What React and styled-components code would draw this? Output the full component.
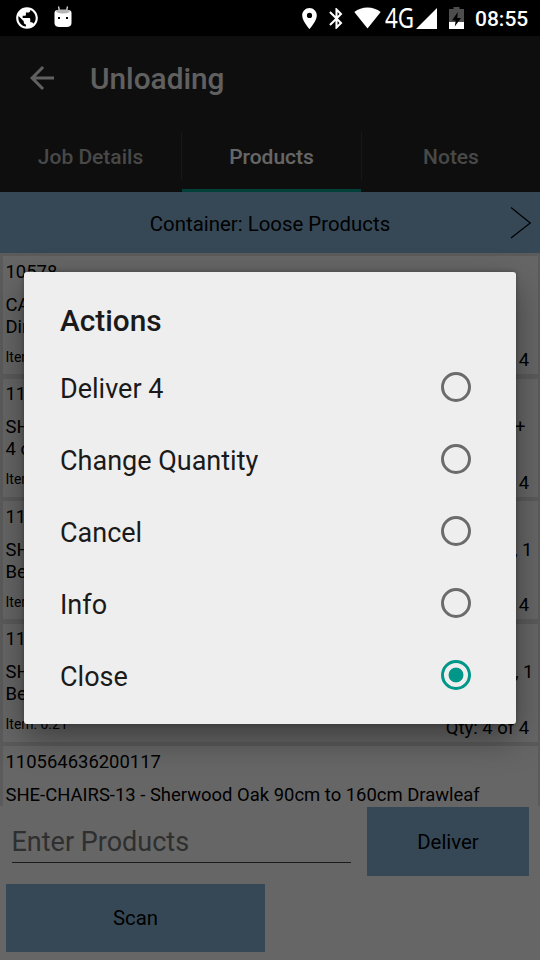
import styled, { createGlobalStyle } from "styled-components"
import { MdPublic, MdLocationOn, MdBluetooth, MdArrowBack } from "react-icons/md"

const products = [
  { code: '10578', lines: ['CA', 'Dir'], item: 'Item: 0.21', qty: 'Qty: 4 of 4' },
  { code: '110564', lines: ['SH', '4 c'], tail: '+', tailPad: 6, item: 'Item: 0.21', qty: 'Qty: 4 of 4' },
  { code: '110564', lines: ['SH', 'Be'], tail: ', 1', tailPad: -1, item: 'Item: 0.21', qty: 'Qty: 4 of 4' },
  { code: '110564', lines: ['SH', 'Be'], tail: ', 1', tailPad: -2, item: 'Item: 0.21', qty: 'Qty: 4 of 4' },
  { code: '110564636200117', lines: ['SHE-CHAIRS-13 - Sherwood Oak 90cm to 160cm Drawleaf'] },
]

const actions = ['Deliver 4', 'Change Quantity', 'Cancel', 'Info', 'Close']

export default function App() {
  return (
    <>
      <GlobalStyle />
      <Screen>
        <StatusBar>
          <StatusLeft>
            <MdPublic size={26} />
            <DroidIcon />
          </StatusLeft>
          <StatusRight>
            <MdLocationOn size={25} />
            <MdBluetooth size={25} />
            <WifiIcon />
            <Network>4G</Network>
            <SignalIcon />
            <BatteryIcon />
            <Clock>08:55</Clock>
          </StatusRight>
        </StatusBar>

        <Toolbar>
          <MdArrowBack size={36} />
          <h1>Unloading</h1>
        </Toolbar>
        <Tabs>
          <Tab>Job Details</Tab>
          <Tab $active>Products</Tab>
          <Tab>Notes</Tab>
        </Tabs>

        <ContainerBar>
          <span>Container: Loose Products</span>
          <svg width="22" height="34" viewBox="0 0 22 34">
            <path d="M1 1.5 L20.3 17 L1 32" fill="none" stroke="#000" strokeWidth="1.2" />
          </svg>
        </ContainerBar>

        <List>
          {products.map((p, i) => (
            <Card key={i}>
              <Line>{p.code}</Line>
              <Description>
                <Line>
                  <span>{p.lines[0]}</span>
                  {p.tail && <Tail $shift={p.tailPad}>{p.tail}</Tail>}
                </Line>
                {p.lines[1] && <Line>{p.lines[1]}</Line>}
              </Description>
              {p.item && (
                <Line>
                  <Small>{p.item}</Small>
                  <Qty>{p.qty}</Qty>
                </Line>
              )}
            </Card>
          ))}
        </List>

        <Footer>
          <EntryRow>
            <Input>Enter Products</Input>
            <Button $width={162}>Deliver</Button>
          </EntryRow>
          <Button $width={259}>Scan</Button>
        </Footer>

        <Scrim>
          <Dialog>
            <h2>Actions</h2>
            {actions.map((name) => (
              <Option key={name}>
                <span>{name}</span>
                <Radio $checked={name === 'Close'} />
              </Option>
            ))}
          </Dialog>
        </Scrim>
      </Screen>
    </>
  )
}

function DroidIcon() {
  return (
    <svg width="18" height="22" viewBox="0 0 18 22">
      <path d="M4.6 0.5 L5.4 5 M13.4 0.5 L12.6 5" stroke="#fff" strokeWidth="1.2" />
      <path d="M0.5 7 Q0.5 4 4 4 H14 Q17.5 4 17.5 7 V17 Q17.5 21 12.5 21 H5.5 Q0.5 21 0.5 17 Z" fill="#fff" />
      <path d="M2 6 Q2.5 3.5 5 3.5 H13 Q15.5 3.5 16 6 Q9 9 2 6 Z" fill="#b5b5b5" />
      <rect x="4" y="11" width="2" height="2" fill="#000" />
      <rect x="12" y="11" width="2" height="2" fill="#000" />
    </svg>
  )
}

function WifiIcon() {
  return (
    <svg width="27" height="22" viewBox="0 0 27 22">
      <path d="M0.3 5 Q6 0.5 13.5 0.5 T26.7 5 L13.5 21.5 Z" fill="#fff" />
    </svg>
  )
}

function SignalIcon() {
  return (
    <svg width="21" height="21" viewBox="0 0 21 21">
      <path d="M0 21 L21 0 V21 Z" fill="#fff" />
    </svg>
  )
}

function BatteryIcon() {
  return (
    <svg width="15" height="22" viewBox="0 0 15 22">
      <path d="M4.5 0 H10.5 V2 H15 V22 H0 V2 H4.5 Z" fill="#4d4d4d" />
      <rect y="15" width="15" height="7" fill="#fff" />
      <path d="M8.8 5 L3 13.5 H6.7 L5.8 19.5 L12 11 H8.3 Z" fill="#000" />
    </svg>
  )
}

const GlobalStyle = createGlobalStyle`
  * {
    box-sizing: border-box;
  }

  body {
    margin: 0;
    background: #666;
    font-family: Roboto, sans-serif;
  }

  h1, h2 {
    margin: 0;
    font-weight: 500;
  }

  svg {
    display: block;
    flex-shrink: 0;
  }
`

const Screen = styled.div`
  position: relative;
  width: 540px;
  height: 960px;
  display: flex;
  flex-direction: column;
  overflow: hidden;
  background: #fff;
  color: #000;
`

const StatusBar = styled.div`
  height: 36px;
  padding: 0 12px 0 14px;
  display: flex;
  justify-content: space-between;
  align-items: center;
  background: #000;
  color: #fff;
`

const StatusLeft = styled.div`
  display: flex;
  align-items: center;
  gap: 14px;

  svg:last-child {
    margin-bottom: 3px;
  }
`

const StatusRight = styled.div`
  display: flex;
  align-items: center;

  svg:nth-of-type(2) {
    margin: 0 5px 0 2px;
  }

  svg:nth-of-type(5) {
    margin-left: 12px;
  }
`

const Network = styled.span`
  width: 31px;
  margin-left: 4px;
  font: 400 27px/36px "Noto Sans", sans-serif;
  transform: scaleX(0.83);
  transform-origin: left;
`

const Clock = styled.span`
  width: 53px;
  margin-left: 11px;
  padding-top: 2px;
  font-size: 21px;
  font-weight: 500;
  line-height: 36px;
`

const Toolbar = styled.div`
  height: 84px;
  padding-left: 24px;
  display: flex;
  align-items: center;
  gap: 30px;
  background: #232323;
  color: #f0f0f0;

  h1 {
    padding-top: 1px;
    font-size: 29.8px;
  }
`

const Tabs = styled.div`
  height: 72px;
  display: grid;
  grid-template-columns: 182px 180px 1fr;
  background: #232323;
`

const Tab = styled.div`
  display: flex;
  align-items: center;
  justify-content: center;
  padding: 2px 1px 0 0;
  font-size: 21px;
  font-weight: 500;
  color: ${({ $active }) => ($active ? '#fff' : '#b5b5b5')};
  background:
    linear-gradient(#3c3c3c, #3c3c3c) right 12px / 1px 48px no-repeat,
    linear-gradient(#00a08f, #00a08f) 0 100% / ${({ $active }) => ($active ? 'calc(100% - 1px) 3px' : '0 0')} no-repeat;

  &:last-child {
    padding-right: 0;
    background: none;
  }
`

const ContainerBar = styled.div`
  height: 61px;
  padding: 0 8px 0 30px;
  display: flex;
  align-items: center;
  background: #87b4d7;
  font-size: 20.4px;

  span {
    flex: 1;
    padding-top: 2px;
    text-align: center;
  }
`

const List = styled.div`
  height: 553px;
  padding: 3px 2.5px 0;
  display: flex;
  flex-direction: column;
  gap: 4.5px;
  overflow: hidden;
  background: #e4e4e4;
`

const Card = styled.div`
  flex: 0 0 118px;
  padding: 4.5px 6px 3.5px 3px;
  background: #fff;
  font-size: 18.45px;
`

const Line = styled.div`
  height: 22px;
  display: flex;
  justify-content: space-between;
  line-height: 22px;
  white-space: nowrap;
`

const Description = styled.div`
  margin: 11px 0;
`

const Tail = styled.span`
  margin-right: ${({ $shift }) => $shift}px;
`

const Small = styled.span`
  font-size: 14px;
  line-height: 17px;
`

const Qty = styled.span`
  padding-top: 0.5px;
  padding-right: 2.5px;
`

const Footer = styled.div`
  padding: 1px 0 0 6px;
  display: flex;
  flex-direction: column;
  gap: 8px;
`

const EntryRow = styled.div`
  display: flex;
  justify-content: space-between;
  padding-right: 11px;
`

const Input = styled.div`
  width: 339px;
  height: 39px;
  margin: 17px 0 0 5.5px;
  border-bottom: 1px solid #444;
  font-size: 27px;
  line-height: 36px;
  color: #757575;
`

const Button = styled.div`
  width: ${({ $width }) => $width}px;
  height: 68.5px;
  display: flex;
  align-items: center;
  justify-content: center;
  padding-top: 1px;
  background: #87b4d7;
  font-size: 20.4px;
`

const Scrim = styled.div`
  position: absolute;
  inset: 36px 0 0;
  padding: 236px 24px 0;
  background: rgba(0, 0, 0, 0.6);
`

const Dialog = styled.div`
  height: 451.5px;
  padding: 30px 45px 0 36px;
  border-radius: 3px;
  background: #eee;
  color: #1a1a1a;
  box-shadow: 0 14px 34px rgba(0, 0, 0, 0.4), 0 0 5px rgba(0, 0, 0, 0.3);

  h2 {
    height: 49.4px;
    font-size: 29.8px;
    line-height: 38px;
  }
`

const Option = styled.div`
  height: 72px;
  display: flex;
  align-items: center;
  justify-content: space-between;
  font-size: 27px;

  span {
    padding-top: 3px;
  }
`

const Radio = styled.div`
  width: 30px;
  height: 30px;
  border: 3px solid ${({ $checked }) => ($checked ? '#009688' : '#6b6b6b')};
  border-radius: 50%;
  background: ${({ $checked }) => ($checked ? 'radial-gradient(circle, #009688 7px, transparent 7.8px)' : 'none')};
`
